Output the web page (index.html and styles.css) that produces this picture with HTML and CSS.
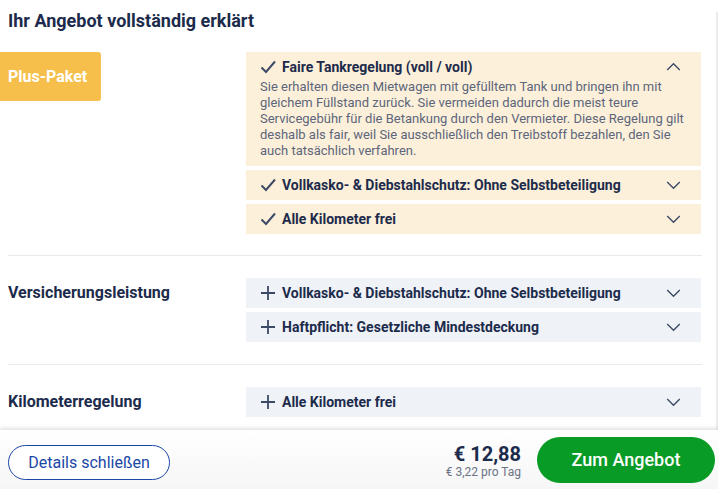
FILE: index.html
```html
<!DOCTYPE html>
<html lang="de">
<head>
<meta charset="utf-8">
<link rel="stylesheet" href="styles.css">
</head>
<body>
<div class="page">
  <div class="scroll">
    <div class="content">
      <h1 class="title">Ihr Angebot vollständig erklärt</h1>

      <section class="section first">
        <div class="label-col"><div class="badge">Plus-Paket</div></div>
        <div class="items">
          <div class="item cream open">
            <div class="item-head">
              <svg class="ico" viewBox="0 0 16 16"><path d="M1.5 8.5 L6 13 L15 2.5" fill="none" stroke="currentColor" stroke-width="2"/></svg>
              <span class="item-title">Faire Tankregelung (voll / voll)</span>
              <svg class="chev" viewBox="0 0 16 10"><path d="M1 9 L8 2 L15 9" fill="none" stroke="currentColor" stroke-width="1.5"/></svg>
            </div>
            <p class="desc">Sie erhalten diesen Mietwagen mit gefülltem Tank und bringen ihn mit gleichem Füllstand zurück. Sie vermeiden dadurch die meist teure Servicegebühr für die Betankung durch den Vermieter. Diese Regelung gilt deshalb als fair, weil Sie ausschließlich den Treibstoff bezahlen, den Sie auch tatsächlich verfahren.</p>
          </div>
          <div class="item cream">
            <div class="item-head">
              <svg class="ico" viewBox="0 0 16 16"><path d="M1.5 8.5 L6 13 L15 2.5" fill="none" stroke="currentColor" stroke-width="2"/></svg>
              <span class="item-title">Vollkasko- &amp; Diebstahlschutz: Ohne Selbstbeteiligung</span>
              <svg class="chev" viewBox="0 0 16 10"><path d="M1 1 L8 8 L15 1" fill="none" stroke="currentColor" stroke-width="1.5"/></svg>
            </div>
          </div>
          <div class="item cream">
            <div class="item-head">
              <svg class="ico" viewBox="0 0 16 16"><path d="M1.5 8.5 L6 13 L15 2.5" fill="none" stroke="currentColor" stroke-width="2"/></svg>
              <span class="item-title">Alle Kilometer frei</span>
              <svg class="chev" viewBox="0 0 16 10"><path d="M1 1 L8 8 L15 1" fill="none" stroke="currentColor" stroke-width="1.5"/></svg>
            </div>
          </div>
        </div>
      </section>

      <section class="section">
        <div class="label-col"><div class="label">Versicherungsleistung</div></div>
        <div class="items">
          <div class="item grey">
            <div class="item-head">
              <svg class="ico" viewBox="0 0 16 16"><path d="M8 1 V15 M1 8 H15" fill="none" stroke="currentColor" stroke-width="1.8"/></svg>
              <span class="item-title">Vollkasko- &amp; Diebstahlschutz: Ohne Selbstbeteiligung</span>
              <svg class="chev" viewBox="0 0 16 10"><path d="M1 1 L8 8 L15 1" fill="none" stroke="currentColor" stroke-width="1.5"/></svg>
            </div>
          </div>
          <div class="item grey">
            <div class="item-head">
              <svg class="ico" viewBox="0 0 16 16"><path d="M8 1 V15 M1 8 H15" fill="none" stroke="currentColor" stroke-width="1.8"/></svg>
              <span class="item-title">Haftpflicht: Gesetzliche Mindestdeckung</span>
              <svg class="chev" viewBox="0 0 16 10"><path d="M1 1 L8 8 L15 1" fill="none" stroke="currentColor" stroke-width="1.5"/></svg>
            </div>
          </div>
        </div>
      </section>

      <section class="section">
        <div class="label-col"><div class="label">Kilometerregelung</div></div>
        <div class="items">
          <div class="item grey">
            <div class="item-head">
              <svg class="ico" viewBox="0 0 16 16"><path d="M8 1 V15 M1 8 H15" fill="none" stroke="currentColor" stroke-width="1.8"/></svg>
              <span class="item-title">Alle Kilometer frei</span>
              <svg class="chev" viewBox="0 0 16 10"><path d="M1 1 L8 8 L15 1" fill="none" stroke="currentColor" stroke-width="1.5"/></svg>
            </div>
          </div>
        </div>
      </section>
    </div>
    <div class="scrollbar"></div>
  </div>

  <footer class="footer">
    <button class="btn-outline">Details schließen</button>
    <div class="price">
      <div class="price-main">€ 12,88</div>
      <div class="price-sub">€ 3,22 pro Tag</div>
    </div>
    <button class="btn-green">Zum Angebot</button>
  </footer>
</div>
</body>
</html>
```

FILE: styles.css
```css
* { box-sizing: border-box; }
html, body { margin: 0; padding: 0; }
body {
  font-family: Roboto, "Liberation Sans", Arial, sans-serif;
  color: #1c2b4b;
  background: #fff;
  width: 718px;
  height: 489px;
  overflow: hidden;
}
.page {
  display: flex;
  flex-direction: column;
  height: 489px;
}
.scroll {
  display: flex;
  height: 430px;
  overflow: hidden;
}
.content {
  flex: 1;
  padding: 0 14px 0 8px;
}
.scrollbar {
  width: 2px;
  margin-top: 12px;
  background: #e9ebee;
}
.title {
  margin: 0;
  padding-top: 11px;
  font-size: 18px;
  line-height: 20px;
  font-weight: 700;
  color: #1c2b4b;
  height: 52px;
}
.section {
  display: grid;
  grid-template-columns: 238px 455px;
  padding: 22px 0;
  border-top: 1px solid #e7e9ed;
}
.section.first {
  border-top: none;
  padding-top: 0;
  padding-bottom: 21px;
}
.badge {
  margin-left: -8px;
  width: 101px;
  height: 49px;
  background: #f6bf4b;
  color: #fff;
  font-weight: 700;
  font-size: 16px;
  line-height: 49px;
  padding-left: 8px;
  border-radius: 0 3px 3px 0;
}
.label {
  font-size: 16px;
  font-weight: 700;
  line-height: 30px;
  color: #1c2b4b;
}
.items {
  display: flex;
  flex-direction: column;
  gap: 4px;
}
.item.cream { background: #fcf0da; }
.item.grey { background: #eff2f7; }
.item-head {
  display: flex;
  align-items: center;
  height: 30px;
  padding: 0 20px 0 14px;
}
.item.open .item-head { height: 29px; }
.ico {
  width: 16px;
  height: 16px;
  color: #3d4a66;
  flex: none;
  margin-right: 6px;
}
.item-title {
  flex: 1;
  font-size: 14px;
  font-weight: 700;
  color: #1c2b4b;
  white-space: nowrap;
}
.chev {
  width: 15px;
  height: 9px;
  color: #3d4a66;
  flex: none;
}
.desc {
  margin: -2px 0 0;
  padding: 0 14px 7px 14px;
  font-size: 13px;
  line-height: 16px;
  color: #5d667a;
}
.footer {
  height: 59px;
  display: flex;
  align-items: center;
  padding: 0 3px 0 8px;
  background: linear-gradient(#ffffff, #f6f6f7);
  box-shadow: 0 -2px 4px rgba(0,0,0,0.12);
  position: relative;
}
.btn-outline {
  width: 162px;
  height: 35px;
  margin-top: 5px;
  border: 1px solid #1a47a6;
  border-radius: 18px;
  background: #fff;
  color: #1a47a6;
  font-family: inherit;
  font-size: 16px;
  font-weight: 400;
  padding: 0;
}
.price {
  margin-left: auto;
  text-align: right;
  margin-right: 16px;
  margin-top: 3px;
}
.price-main {
  font-size: 20px;
  font-weight: 700;
  line-height: 22px;
  color: #1c2b4b;
}
.price-sub {
  font-size: 12px;
  line-height: 15px;
  color: #6b7385;
}
.btn-green {
  width: 178px;
  height: 46px;
  border: none;
  border-radius: 23px;
  background: #089b25;
  color: #fff;
  font-family: inherit;
  font-size: 18px;
  font-weight: 500;
  padding: 0;
}
```
